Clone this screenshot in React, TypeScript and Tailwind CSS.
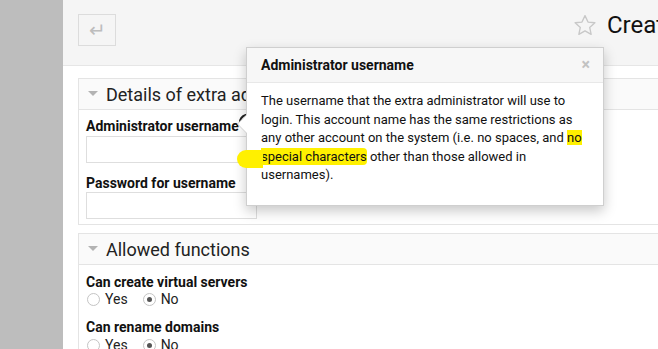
import React from "react";

const FONT = { fontFamily: "Roboto, 'Liberation Sans', sans-serif" };

function Triangle() {
  return (
    <svg width="10" height="6" viewBox="0 0 10 6" className="shrink-0">
      <path d="M0 0 L10 0 L5 5 Z" fill="#b3b3b3" />
    </svg>
  );
}

function Panel({ title, children }: { title: string; children: React.ReactNode }) {
  return (
    <div className="w-[700px] border border-[#e4e4e4] bg-white">
      <div className="flex h-[31px] items-center gap-[8px] border-b border-[#e4e4e4] bg-[#fafafa] pl-[9px]">
        <Triangle />
        <span className="whitespace-nowrap text-[18px] text-[#222]">{title}</span>
      </div>
      <div className="px-[7px] pb-[5px] pt-[7px]">{children}</div>
    </div>
  );
}

function Radio({ checked }: { checked?: boolean }) {
  return (
    <span className="flex h-[13px] w-[13px] items-center justify-center rounded-full border border-[#c4c4c4] bg-white">
      {checked && <span className="h-[5px] w-[5px] rounded-full bg-[#555]" />}
    </span>
  );
}

function YesNo() {
  return (
    <div className="flex h-[16px] items-center gap-[5px] pl-[1px] text-[14px] leading-[16px] text-[#222]">
      <Radio />
      <span className="mr-[10px]">Yes</span>
      <Radio checked />
      <span>No</span>
    </div>
  );
}

const label = "text-[14px] font-bold leading-[18px] text-[#111]";

export default function App() {
  return (
    <div className="flex h-[349px] w-[658px] overflow-hidden bg-white" style={FONT}>
      <div className="w-[63px] shrink-0 bg-[#bdbdbd]" />
      <div className="relative flex-1 overflow-hidden">
        <div className="flex h-[66px] items-start border-b border-[#e6e6e6] bg-[#f5f5f5] pl-[15px] pt-[14px]">
          <button className="flex h-[32px] w-[38px] shrink-0 items-center justify-center border border-[#dcdcdc] bg-[#f5f5f5] text-[20px] leading-none text-[#bdbdbd]">
            ↵
          </button>
          <div className="ml-[456px] mt-[-7px] flex shrink-0 items-center gap-[9px] whitespace-nowrap">
            <svg width="26" height="25" viewBox="0 0 24 24">
              <path
                d="M12 2.5l2.9 6.2 6.6.7-5 4.5 1.4 6.6L12 17.1l-5.9 3.4 1.4-6.6-5-4.5 6.6-.7z"
                fill="none"
                stroke="#c8c8c8"
                strokeWidth="1.3"
                strokeLinejoin="round"
              />
            </svg>
            <span className="text-[24px] text-[#111]">Create Extra Administrator</span>
          </div>
        </div>

        <div className="flex flex-col gap-[8px] pl-[15px] pt-[12px]">
          <Panel title="Details of extra administrator">
            <div className={label}>Administrator username</div>
            <div className="mt-[1px] h-[27px] w-[171px] border border-[#dedede]" />
            <div className={`mt-[11px] ${label}`}>Password for username</div>
            <div className="h-[27px] w-[171px] border border-[#dedede]" />
          </Panel>
          <Panel title="Allowed functions">
            <div className={`mt-[1px] ${label}`}>Can create virtual servers</div>
            <YesNo />
            <div className={`mt-[11px] ${label}`}>Can rename domains</div>
            <div className="mt-[1px]">
              <YesNo />
            </div>
          </Panel>
        </div>

        {/* help icon peeking beside the label */}
        <svg className="absolute left-[175px] top-[114px]" width="10" height="10" viewBox="0 0 10 10">
          <path d="M2 9 C2 5 4 2 8 1" stroke="#222" strokeWidth="2.2" fill="none" strokeLinecap="round" />
        </svg>

        {/* popover */}
        <div className="absolute left-[183px] top-[47px] w-[358px] border border-[#cfcfcf] bg-white shadow-[0_5px_12px_rgba(0,0,0,0.22)]">
          <div className="absolute left-[-10px] top-[66px] h-0 w-0 border-y-[10px] border-r-[10px] border-y-transparent border-r-[#cfcfcf]" />
          <div className="absolute left-[-9px] top-[67px] h-0 w-0 border-y-[9px] border-r-[9px] border-y-transparent border-r-white" />
          <div className="flex h-[35px] items-center justify-between border-b border-[#e8e8e8] bg-[#f7f7f7] pl-[14px] pr-[13px]">
            <span className="text-[14px] font-bold text-[#111]">Administrator username</span>
            <span className="text-[16px] font-bold leading-none text-[#c2c2c2]">×</span>
          </div>
          <div className="px-[14px] pb-[20px] pt-[9px] text-[13px] leading-[18.6px] text-[#111]">
            The username that the extra administrator will use to login. This account name has the same
            restrictions as any other account on the system (i.e. no spaces, and{" "}
            <span className="bg-[#fff000]">no</span>{" "}
            <span className="rounded-r-[4px] bg-[#fff000] py-[1px]">special characters</span> other
            than those allowed in usernames).
          </div>
        </div>
        {/* highlighter stroke spilling past the popover edge */}
        <div className="absolute left-[174px] top-[150px] h-[18px] w-[26px] rounded-l-[9px] bg-[#fff000]" />
      </div>
    </div>
  );
}
